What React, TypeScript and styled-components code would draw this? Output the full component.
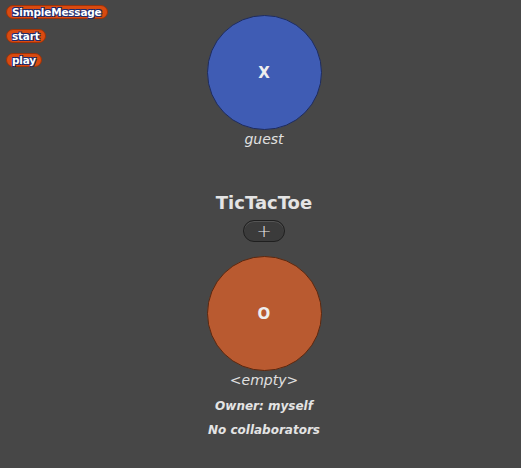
import React from "react";
import styled, { createGlobalStyle } from "styled-components";

const Global = createGlobalStyle`
  html, body { margin: 0; padding: 0; background: #474747; }
  body { width: 521px; height: 468px; overflow: hidden; font-family: "DejaVu Sans", sans-serif; }
`;

const Stage = styled.div`
  display: grid;
  width: 521px;
  height: 468px;
`;

const Palette = styled.div`
  grid-area: 1 / 1;
  display: flex;
  flex-direction: column;
  align-items: flex-start;
  gap: 10px;
  padding: 5px 0 0 6px;
`;

const Block = styled.div`
  height: 14px;
  box-sizing: border-box;
  padding: 0 5px;
  border-radius: 7px;
  background: #d94a10;
  border: 1px solid #9c3208;
  color: #fff;
  font-family: "DejaVu Sans", sans-serif;
  font-weight: bold;
  font-size: 10.5px;
  letter-spacing: -0.2px;
  line-height: 12px;
  text-shadow: -1px -1px 0 #1e2a6a, 1px 1px 0 #1e2a6a, 1px -1px 0 #1e2a6a, -1px 1px 0 #1e2a6a;
`;

const Main = styled.div`
  grid-area: 1 / 1;
  display: flex;
  flex-direction: column;
  align-items: center;
  padding: 15px 0 0 7px;
`;

const Seat = styled.div<{ $bg: string; $border: string }>`
  width: 115px;
  height: 115px;
  box-sizing: border-box;
  border-radius: 50%;
  background: ${(p) => p.$bg};
  border: 1px solid ${(p) => p.$border};
  display: flex;
  align-items: center;
  justify-content: center;
  color: #eee;
  font-weight: bold;
  font-size: 15px;
`;

const Caption = styled.div`
  color: #e0e0e0;
  font-style: italic;
  font-size: 14px;
  line-height: 18px;
`;

const Title = styled.div`
  color: #e4e4e4;
  font-weight: bold;
  font-size: 18px;
  line-height: 22px;
  margin-top: 44px;
`;

const AddButton = styled.div`
  width: 42px;
  height: 22px;
  box-sizing: border-box;
  margin-top: 6px;
  border-radius: 11px;
  background: #3b3b3b;
  border: 1px solid #1f1f1f;
  box-shadow: inset 0 1px 0 #555;
  display: flex;
  align-items: center;
  justify-content: center;
  color: #e8e8e8;
  font-size: 18px;
  font-weight: 300;
  line-height: 1;
`;

const Gap = styled.div<{ $h: number }>`
  height: ${(p) => p.$h}px;
`;

const Info = styled.div`
  color: #e4e4e4;
  font-weight: bold;
  font-style: italic;
  font-size: 12px;
  line-height: 14px;
  margin-top: 10px;
`;

export default function App() {
  return (
    <>
      <Global />
      <Stage>
        <Main>
          <Seat $bg="#3f5cb4" $border="#1f2c5c">X</Seat>
          <Caption>guest</Caption>
          <Title>TicTacToe</Title>
          <AddButton>+</AddButton>
          <Gap $h={14} />
          <Seat $bg="#b95a30" $border="#5a2810">O</Seat>
          <Caption>&lt;empty&gt;</Caption>
          <Info>Owner: myself</Info>
          <Info>No collaborators</Info>
        </Main>
        <Palette>
          <Block>SimpleMessage</Block>
          <Block>start</Block>
          <Block>play</Block>
        </Palette>
      </Stage>
    </>
  );
}
